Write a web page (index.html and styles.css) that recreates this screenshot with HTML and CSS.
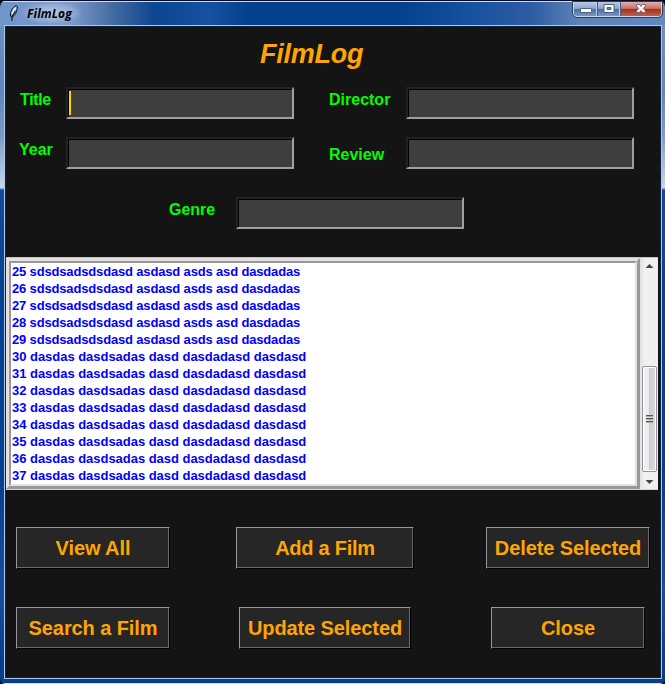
FILE: index.html
```
<!DOCTYPE html>
<html lang="en">
<head>
<meta charset="utf-8">
<title>FilmLog</title>
<link rel="stylesheet" href="styles.css">
</head>
<body>
<div class="window">
  <header class="titlebar">
    <svg class="feather" width="10" height="18" viewBox="0 0 10 18"><path d="M7.400 1.500C4 3 1.500 6.500 1.300 11l1.200 2.500C6 12 8.500 7 8.300 2.500z" fill="#78acd9" stroke="#0b1523"/><path d="M6.500 3.500 2.900 10" stroke="#e6f5ff" stroke-width="1.7"/><path d="M6.300 7 2.900 13v4" fill="none" stroke="#0b1523" stroke-width="1.100"/></svg>
    <span class="caption">FilmLog</span>
    <div class="controls">
      <span class="control minimize"><svg width="12" height="15"><rect x=".5" y="7.500" width="11" height="4" rx=".5" fill="#fff" stroke="#52617e"/></svg></span>
      <span class="control maximize"><svg width="12" height="15"><path d="M1 3.500h10v8H1z" fill="#fff" stroke="#52617e"/><path d="M4 6.500h4v2H4z" fill="#6984ae" stroke="#52617e"/></svg></span>
      <span class="control close"><svg width="12" height="15"><path d="M1.500 3.500h3L6 5.500l1.500-2h3V5L8.200 7.500l2.300 2.500v1.500h-3L6 9.500l-1.500 2h-3V10l2.300-2.500L1.500 5z" fill="#fff" stroke="#665a6b" stroke-width=".9"/></svg></span>
    </div>
  </header>
  <main class="client">
    <h1>FilmLog</h1>
    <form class="fields">
      <label class="title-label">Title</label><div class="entry"><i class="caret"></i></div>
      <label class="director-label">Director</label><div class="entry"></div>
      <label class="year-label">Year</label><div class="entry"></div>
      <label class="review-label">Review</label><div class="entry"></div>
    </form>
    <div class="genre"><label>Genre</label><div class="entry"></div></div>
    <section class="results">
      <div class="listbox"><div class="rows">
        <div>25 sdsdsadsdsdasd asdasd asds asd dasdadas</div>
        <div>26 sdsdsadsdsdasd asdasd asds asd dasdadas</div>
        <div>27 sdsdsadsdsdasd asdasd asds asd dasdadas</div>
        <div>28 sdsdsadsdsdasd asdasd asds asd dasdadas</div>
        <div>29 sdsdsadsdsdasd asdasd asds asd dasdadas</div>
        <div class="wide">30 dasdas dasdsadas dasd dasdadasd dasdasd</div>
        <div class="wide">31 dasdas dasdsadas dasd dasdadasd dasdasd</div>
        <div class="wide">32 dasdas dasdsadas dasd dasdadasd dasdasd</div>
        <div class="wide">33 dasdas dasdsadas dasd dasdadasd dasdasd</div>
        <div class="wide">34 dasdas dasdsadas dasd dasdadasd dasdasd</div>
        <div class="wide">35 dasdas dasdsadas dasd dasdadasd dasdasd</div>
        <div class="wide">36 dasdas dasdsadas dasd dasdadasd dasdasd</div>
        <div class="wide">37 dasdas dasdsadas dasd dasdadasd dasdasd</div>
      </div></div>
      <div class="scrollbar">
        <svg class="arrow" width="17" height="16"><path d="M4.500 10 8.500 6l4 4z" fill="#444"/></svg>
        <div class="thumb"><i></i><i></i><i></i></div>
        <svg class="arrow" width="17" height="17"><path d="M4.500 8h8l-4 4z" fill="#444"/></svg>
      </div>
    </section>
    <div class="actions first">
      <button class="view">View All</button><button class="add">Add a Film</button><button class="delete">Delete Selected</button>
    </div>
    <div class="actions second">
      <button class="search">Search a Film</button><button class="update">Update Selected</button><button class="quit">Close</button>
    </div>
  </main>
</div>
</body>
</html>
```
FILE: styles.css
```
* { box-sizing: border-box; }
body { margin: 0; background: #050819; overflow: hidden; font-family: "Liberation Sans", Arial, sans-serif; }
.window {
  width: 665px; height: 684px; padding: 2px 3px 5px 4px; overflow: hidden;
  border-radius: 7px 7px 5px 5px;
  background:
    linear-gradient(#060a26 0 1px, #c9dcf4 1px 2px, transparent 2px),
    linear-gradient(0deg, #d3e2f2 0 1px, #063c86 1px 2px, transparent 2px),
    linear-gradient(90deg, #6f95c9 0, #7d9bca 70px, #40699f 115px, #0c4590 155px, #1650a0 210px, #03408d 250px, #03408d 400px, #17519f 470px, #2c5ba3 530px, #6083b7 580px, #6288be 665px) 0 0 / 100% 26px no-repeat,
    linear-gradient(#6e94c9 0, #6086bd 90px, #7c9ac5 135px, #c7d6e8 187px, #b5cce9 188px, #104b98 190px, #064493 280px, #03408d 480px, #15509f 590px, #03408d 660px);
}
.titlebar { height: 23px; display: flex; align-items: flex-start; padding-left: 5px; }
.feather { margin-top: 2px; }
.caption {
  margin-left: 3px; padding: 1px 9px 0 5px; height: 22px;
  font: italic bold 12px/22px "Open Sans", sans-serif; letter-spacing: .1px; color: #000;
  background: radial-gradient(ellipse, #b8c9e4 0, #a3b9dc99 50%, transparent 75%);
}
.controls { display: flex; width: 89px; height: 15px; margin-left: auto; border: 1px solid #cad8eb; border-top: 0; border-radius: 0 0 4px 4px; overflow: hidden; outline: 1px solid #243c65; }
.control { width: 24px; display: flex; justify-content: center; border-right: 1px solid #405f91; box-shadow: inset -1px 0 #b9cce6; background: linear-gradient(#b9c9e1, #8ea7cc 46%, #496da3 50%, #7897c3); }
.control svg { margin-top: -1px; }
.maximize { width: 23px; }
.close { width: 40px; border-right: 0; background: linear-gradient(#deb0aa, #ca7167 46%, #a72d1d 50%, #bd604a); box-shadow: none; }
.client { display: flex; flex-direction: column; width: 658px; height: 654px; border: 1px solid #adc8e8; box-shadow: inset 0 0 0 1px #10213d; background: #141414; padding: 1px; }
h1 { margin: 10px 0 0 254px; height: 34px; font: italic bold 27px/34px "Liberation Sans", Arial, sans-serif; letter-spacing: -.25px; color: orange; }
.fields { display: grid; grid-template-columns: 60px 228px 112px 228px; grid-template-rows: 32px 32px; row-gap: 18px; margin: 16px 0 0; }
label { color: #0f0; font-weight: bold; font-size: 16px; line-height: 18px; }
.title-label { padding: 4px 0 0 14px; letter-spacing: -.35px; }
.director-label { padding: 4px 0 0 35px; }
.year-label { padding: 4px 0 0 13px; }
.review-label { padding: 9px 0 0 35px; }
.entry { width: 228px; height: 32px; border: 2px solid; border-color: #222 #a0a0a0 #a0a0a0 #222; background: #3e3e3e; box-shadow: inset 1px 1px #000; }
.caret { display: block; width: 2px; height: 24px; margin: 2px 0 0 1px; background: gold; }
.genre { display: grid; grid-template-columns: 67px 228px; margin: 28px 0 0 163px; }
.genre label { padding-top: 4px; }
.results { display: flex; height: 233px; margin-top: 28px; width: 652px; background: #e5e1e1; border-top: 1px solid #c6c2c2; border-bottom: 1px solid #d7d3d3; }
.listbox { width: 634px; height: 231px; border: 3px solid; border-color: #e5e1e1 #999 #999 #e5e1e1; }
.rows { height: 225px; border: 2px solid; border-color: #999 #e3e3e3 #e3e3e3 #999; padding: 0 1px; background: #fff; color: #00f; font-weight: bold; font-size: 13px; line-height: 17px; letter-spacing: -.16px; white-space: nowrap; }
.wide { letter-spacing: -.03px; }
.scrollbar { width: 17px; margin-left: 1px; background: linear-gradient(90deg, #e5e5e5, #f1f1f1 4px, #eee); display: flex; flex-direction: column; }
.arrow { flex: none; }
.thumb { width: 15px; height: 106px; margin: 92px 0 0 1px; border: 1px solid #929296; border-radius: 2px; box-shadow: inset 0 0 0 1px #fff; background: linear-gradient(90deg, #f5f5f5, #e9e9eb 45%, #cfcfd3 50%, #dadade); display: flex; flex-direction: column; align-items: center; justify-content: center; gap: 1px; }
.thumb i { width: 7px; height: 2px; background: #555; border-bottom: 1px solid #aaa; }
.actions { display: flex; height: 42px; }
.first { margin: 37px 0 0 10px; }
.second { margin: 38px 0 0 10px; }
button { padding: 0; margin: 0; height: 42px; border: 1px solid; border-color: #999 #000 #000 #999; border-radius: 0; background: #262626; box-shadow: inset -1px -1px #696969; color: orange; font: bold 20px/40px "Liberation Sans", Arial, sans-serif; letter-spacing: -.1px; }
.view, .search, .quit { width: 154px; }
.add { width: 178px; margin-left: 66px; letter-spacing: -.25px; }
.delete { width: 164px; margin-left: 72px; }
.update { width: 172px; margin-left: 69px; }
.quit { margin-left: 80px; }
```
